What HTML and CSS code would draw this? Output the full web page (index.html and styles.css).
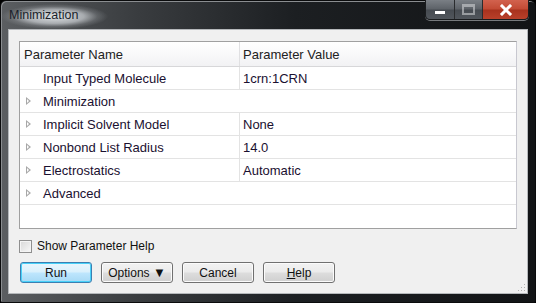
FILE: index.html
```html
<!DOCTYPE html>
<html lang="en">
<head>
    <meta charset="UTF-8">
    <title>Minimization</title>
    <link rel="stylesheet" href="styles.css">
</head>
<body>
    <div class="window">
        <div class="titlebar">
            <span class="title">Minimization</span>
            <div class="controls">
                <div class="ctl ctl-min"><span class="bar"></span></div>
                <div class="ctl ctl-max"><span class="box"></span></div>
                <div class="ctl ctl-close">
                    <svg width="16" height="12" viewBox="0 0 16 12">
                        <path d="M4 2 L12 10 M12 2 L4 10" stroke="#fff" stroke-width="3" stroke-linecap="square"/>
                    </svg>
                </div>
            </div>
        </div>

        <div class="client">
            <div class="grid">
                <div class="row head">
                    <div class="cell name">Parameter Name</div>
                    <div class="cell value">Parameter Value</div>
                </div>
                <div class="row">
                    <div class="cell name"><span class="arrow blank"></span>Input Typed Molecule</div>
                    <div class="cell value">1crn:1CRN</div>
                </div>
                <div class="row">
                    <div class="cell name span"><span class="arrow"></span>Minimization</div>
                </div>
                <div class="row">
                    <div class="cell name"><span class="arrow"></span>Implicit Solvent Model</div>
                    <div class="cell value">None</div>
                </div>
                <div class="row">
                    <div class="cell name"><span class="arrow"></span>Nonbond List Radius</div>
                    <div class="cell value">14.0</div>
                </div>
                <div class="row">
                    <div class="cell name"><span class="arrow"></span>Electrostatics</div>
                    <div class="cell value">Automatic</div>
                </div>
                <div class="row">
                    <div class="cell name span"><span class="arrow"></span>Advanced</div>
                </div>
            </div>

            <label class="check">
                <span class="box"></span>Show Parameter Help
            </label>

            <div class="buttons">
                <button class="btn default">Run</button>
                <button class="btn">Options <span class="tri">&#9660;</span></button>
                <button class="btn">Cancel</button>
                <button class="btn"><u>H</u>elp</button>
            </div>
            <span class="grip"></span>
        </div>
    </div>
</body>
</html>
```

FILE: styles.css
```css
body {
    margin: 0;
    background: #000;
    font-family: "Liberation Sans", Arial, sans-serif;
}

.window {
    width: 536px;
    height: 303px;
    box-sizing: border-box;
    padding: 0 7px 8px 7px;
    display: flex;
    flex-direction: column;
    border: 1px solid #0a0b0c;
    border-radius: 6px 6px 2px 2px;
    background: linear-gradient(to right, #5b5e61 0%, #3a3d40 25%, #1c1f22 55%, #121416 100%);
    box-shadow: inset 1px 1px 0 #8a8d90;
}

.titlebar {
    height: 28px;
    display: flex;
    justify-content: space-between;
    align-items: flex-start;
}

.title {
    margin: 3px 0 0 -7px;
    padding: 3px 30px 6px 8px;
    font-size: 12.5px;
    line-height: 16px;
    color: #1a1f2a;
    background: radial-gradient(closest-side, rgba(232,235,238,0.95) 0%, rgba(200,204,208,0.75) 55%, rgba(160,164,168,0.3) 80%, rgba(120,124,128,0) 100%);
}

.controls {
    display: flex;
    margin-top: -1px;
    margin-right: -1px;
    border: 1px solid #1a1c1e;
    border-top: none;
    border-radius: 0 0 5px 5px;
    overflow: hidden;
    box-shadow: 0 1px 0 #777a7d;
}

.ctl {
    height: 19px;
    display: flex;
    align-items: center;
    justify-content: center;
    border-left: 1px solid #2a2c2e;
    box-sizing: border-box;
}

.ctl-min,
.ctl-max {
    width: 28px;
    background: linear-gradient(#7a7f85, #5d6268 48%, #464b51 52%, #51565c);
}

.ctl-min {
    border-left: none;
}

.ctl-min .bar {
    width: 10px;
    height: 3px;
    margin-top: 5px;
    background: #fff;
}

.ctl-max .box {
    width: 9px;
    height: 6px;
    border: 2px solid #d8dadc;
    border-top-width: 3px;
    box-sizing: content-box;
    opacity: 0.55;
}

.ctl-close {
    width: 46px;
    background: linear-gradient(#d2624e, #c24a34 48%, #a8321e 52%, #b9402a);
}

.client {
    flex: 1;
    position: relative;
    background: #f0f0f0;
    border: 1px solid #b5b8bb;
    padding: 11px 10px 0 10px;
    display: flex;
    flex-direction: column;
}

.grid {
    height: 188px;
    background: #fff;
    border: 1px solid #a0a0a0;
    border-right-color: #c8c8d0;
    font-size: 13px;
    color: #1a1030;
    box-sizing: border-box;
}

.row {
    display: flex;
    height: 23px;
    border-bottom: 1px solid #e3e3e3;
    box-sizing: border-box;
}

.row.head {
    height: 25px;
    background: linear-gradient(#ffffff, #f2f2f4);
    border-bottom: 1px solid #d7d7d9;
    color: #222;
}

.cell {
    display: flex;
    align-items: center;
    white-space: nowrap;
}

.cell.name {
    width: 220px;
    box-sizing: border-box;
    padding-left: 4px;
    border-right: 1px solid #e3e3e3;
}

.cell.name.span {
    border-right: none;
}

.cell.value {
    flex: 1;
    padding-left: 3px;
}

.head .cell.name {
    border-right-color: #e0e0e2;
}

.arrow {
    width: 0;
    height: 0;
    margin: 0 12px 0 2px;
    border-top: 4px solid transparent;
    border-bottom: 4px solid transparent;
    border-left: 5px solid #a8a8a8;
    position: relative;
}

.arrow::after {
    content: "";
    position: absolute;
    left: -4px;
    top: -2px;
    border-top: 2px solid transparent;
    border-bottom: 2px solid transparent;
    border-left: 2px solid #fff;
}

.arrow.blank {
    border-left-color: transparent;
}

.arrow.blank::after {
    display: none;
}

.check {
    display: flex;
    align-items: center;
    margin-top: 10px;
    font-size: 12px;
    color: #111;
    height: 14px;
}

.check .box {
    width: 11px;
    height: 11px;
    border: 1px solid #8f8f8f;
    background: linear-gradient(135deg, #d8d8d8, #f8f8f8);
    margin: 0 5px 0 0;
    box-shadow: inset 0 0 0 1px #f4f4f4;
}

.buttons {
    display: flex;
    gap: 9px;
    margin-top: 9px;
    padding-left: 1px;
}

.btn {
    width: 72px;
    height: 21px;
    padding: 0;
    font-family: "Liberation Sans", Arial, sans-serif;
    font-size: 12px;
    color: #111;
    border: 1px solid #707070;
    border-radius: 3px;
    background: linear-gradient(#f2f2f2 0%, #ebebeb 48%, #dddddd 52%, #cfcfcf 100%);
    box-shadow: inset 0 0 0 1px #fbfbfb;
}

.btn.default {
    border-color: #3c7fb1;
    background: linear-gradient(#eaf6fd 0%, #d9f0fc 48%, #bee6fd 52%, #a7d9f5 100%);
    box-shadow: inset 0 0 0 1px #48d1f9;
}

.tri {
    font-size: 13px;
}

.grip {
    position: absolute;
    right: 2px;
    bottom: 2px;
    width: 8px;
    height: 8px;
    background:
        radial-gradient(circle, #b0b0b0 0.8px, transparent 1px) 0 0 / 3px 3px;
    clip-path: polygon(100% 0, 100% 100%, 0 100%);
}
```
